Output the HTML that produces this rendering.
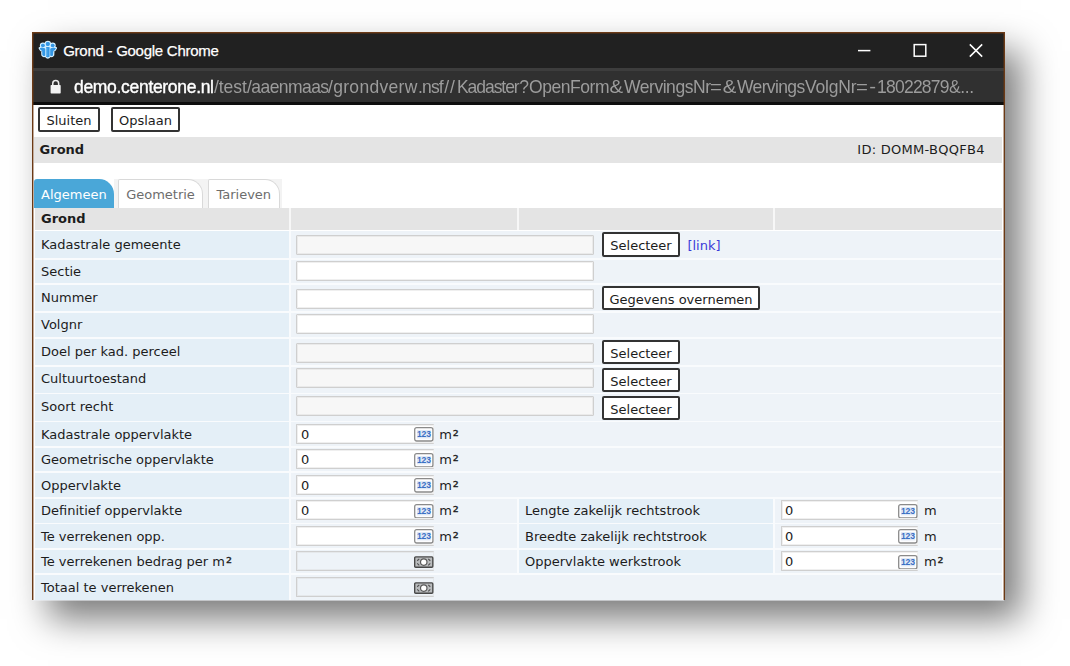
<!DOCTYPE html>
<html lang="nl">
<head>
<meta charset="utf-8">
<title>Grond - Google Chrome</title>
<style>
html,body{margin:0;padding:0;background:#fff;}
body{width:1070px;height:666px;overflow:hidden;position:relative;font-family:"DejaVu Sans","Liberation Sans",sans-serif;font-size:13px;color:#1c1c1c;}
#win{position:absolute;left:32px;top:32px;width:973px;height:568.4px;background:#fff;box-shadow:16px 19px 34px rgba(0,0,0,.52);}
#win div,#win span,#win a,#win svg.ic,#win svg.abs{position:absolute;box-sizing:border-box;white-space:nowrap;}
.bl{background:#6b3a16;}
.bl2{background:rgba(107,58,22,.42);}
.tbar{background:#212121;}
.sep{background:#3d3d3d;}
.ubar{background:#303030;}
.blk{background:#0e0e0e;}
.title{-webkit-text-stroke:.25px #fff;font-family:"Liberation Sans",sans-serif;font-size:15px;letter-spacing:-.26px;color:#fff;line-height:20px;}
.url{font-family:"Liberation Sans",sans-serif;font-size:18.5px;transform:scaleX(.946);transform-origin:0 0;color:#9c9c9c;line-height:24px;text-align:center;}
.url.w{color:#fff;-webkit-text-stroke:.4px #fff;}
.btn{background:#fff;border:2px solid #333;border-radius:2px;text-align:center;line-height:24px;color:#1c1c1c;}
.gray{background:#e4e4e4;}
.lab{background:#e4eff7;}
.val{background:#eef3f8;}
.t{line-height:18px;}
.bold{font-weight:bold;}
.inp{background:#fff;border:1px solid #cfcfcf;box-shadow:inset 0 0 0 1px rgba(214,214,214,.4);border-radius:1px;}
.inp.ro{background:#f7f7f7;}
.inp.nr{border-right:none;}
.inp.tr{background:transparent;}
.tab{background:#fff;border:1px solid #d9d9d9;border-bottom:none;border-radius:2px 15px 0 0;color:#6d6d6d;text-align:center;line-height:30px;}
.tab.on{background:#4aa7d8;border:none;color:#fff;border-radius:3px 15px 0 0;line-height:32px;}
.tabbg{background:#f3f3f3;}
.tbg{background:#f9fbfd;}
.hbg{background:#f7f7f7;}
.half{background:rgba(238,243,248,.55);}
#win span.sq{position:relative;font-size:15px;line-height:0;top:2px;left:.9px;-webkit-text-stroke:.3px #1c1c1c;}
a.lnk{color:#3b3bd9;text-decoration:none;line-height:18px;}
</style>
</head>
<body>
<div id="win">

<div class="tbar" style="left:1px;top:1px;width:971px;height:35px;"></div>
<div class="sep" style="left:1px;top:36px;width:971px;height:2.5px;"></div>
<div class="ubar" style="left:1px;top:38.5px;width:971px;height:32px;"></div>
<div class="blk" style="left:1px;top:70.4px;width:971px;height:2.2px;"></div>
<svg class="abs" viewBox="0 0 20 20" width="19.6" height="19.6" style="left:5.7px;top:8.2px;filter:blur(.35px)"><g fill="#3597e4" stroke="#d2eeff" stroke-width="2.7" stroke-linejoin="round" paint-order="stroke"><circle cx="10" cy="4" r="2"/><circle cx="5" cy="5.6" r="1.8"/><circle cx="15" cy="5.6" r="1.8"/><path d="M8.2 7.6 Q10 6.6 11.8 7.6 L11.8 16.6 Q10 18.8 8.2 16.6 Z"/><path d="M1.9 8.3 Q4.6 7.4 7.3 9 L7.3 15.8 Q6 16.8 4.7 15.2 L4.5 11 Q2.8 10.6 1.9 8.3 Z"/><path d="M18.1 8.3 Q15.4 7.4 12.7 9 L12.7 15.8 Q14 16.8 15.3 15.2 L15.5 11 Q17.2 10.6 18.1 8.3 Z"/></g><g fill="#3597e4"><circle cx="10" cy="4" r="2"/><circle cx="5" cy="5.6" r="1.8"/><circle cx="15" cy="5.6" r="1.8"/><path d="M8.2 7.6 Q10 6.6 11.8 7.6 L11.8 16.6 Q10 18.8 8.2 16.6 Z"/><path d="M1.9 8.3 Q4.6 7.4 7.3 9 L7.3 15.8 Q6 16.8 4.7 15.2 L4.5 11 Q2.8 10.6 1.9 8.3 Z"/><path d="M18.1 8.3 Q15.4 7.4 12.7 9 L12.7 15.8 Q14 16.8 15.3 15.2 L15.5 11 Q17.2 10.6 18.1 8.3 Z"/></g><path d="M8.9 8 L8.9 16.6" stroke="#7cc4f2" stroke-width="0.9" fill="none"/></svg>
<span class="title" style="left:31.2px;top:8.6px">Grond - Google Chrome</span>
<svg class="abs" viewBox="0 0 140 20" width="140" height="20" style="left:820px;top:8px" fill="none" stroke="#fff" stroke-width="1.5"><path d="M6 10.6 H18.4"/><rect x="62.2" y="4.6" width="11.6" height="11.6"/><path d="M117.8 4.4 L130.2 16.6 M130.2 4.4 L117.8 16.6"/></svg>
<svg class="abs" viewBox="0 0 12 15" width="12" height="15" style="left:17.5px;top:46.5px"><path d="M2.75 7 V4.5 A2.95 2.95 0 0 1 8.65 4.5 V7" fill="none" stroke="#ededed" stroke-width="1.5"/><rect x="0.6" y="6.1" width="10.1" height="8.4" rx="0.7" fill="#f2f2f2"/></svg>
<span class="url w" style="left:42.3px;top:42.7px;width:147.67px;letter-spacing:-0.328px;">demo.centerone.nl</span>
<span class="url" style="left:182px;top:42.7px;width:34.67px;letter-spacing:-0.059px;">/test</span>
<span class="url" style="left:214.8px;top:42.7px;width:86.15px;letter-spacing:-0.598px;">/aaenmaas</span>
<span class="url" style="left:296.3px;top:42.7px;width:94.82px;letter-spacing:0.33px;">/grondverw</span>
<span class="url" style="left:386px;top:42.7px;width:26.32px;letter-spacing:-0.877px;">.nsf</span>
<span class="url" style="left:410.9px;top:42.7px;width:14.8px;letter-spacing:0.951px;">//</span>
<span class="url" style="left:424.9px;top:42.7px;width:65.12px;letter-spacing:-1.116px;">Kadaster</span>
<span class="url" style="left:486.5px;top:42.7px;width:10.89px;">?</span>
<span class="url" style="left:496.8px;top:42.7px;width:84.57px;letter-spacing:-0.481px;">OpenForm</span>
<span class="url" style="left:576.8px;top:42.7px;width:13.36px;transform:scaleX(1.1);">&amp;</span>
<span class="url" style="left:591.5px;top:42.7px;width:91.44px;letter-spacing:-0.485px;">WervingsNr</span>
<span class="url" style="left:678px;top:42.7px;width:10.91px;transform:scaleX(1.1);">=</span>
<span class="url" style="left:690px;top:42.7px;width:13.64px;transform:scaleX(1.1);">&amp;</span>
<span class="url" style="left:705px;top:42.7px;width:71.35px;letter-spacing:-0.678px;">Wervings</span>
<span class="url" style="left:772.5px;top:42.7px;width:54.44px;letter-spacing:-0.182px;">VolgNr</span>
<span class="url" style="left:824px;top:42.7px;width:10.73px;transform:scaleX(1.1);">=</span>
<span class="url" style="left:835.8px;top:42.7px;width:8.45px;transform:scaleX(1.1);">-</span>
<span class="url" style="left:845.1px;top:42.7px;width:75.9px;letter-spacing:-0.802px;">18022879</span>
<span class="url" style="left:916.9px;top:42.7px;width:26px;letter-spacing:-0.44px;">&amp;...</span>
<div class="btn" style="left:6px;top:75.4px;width:62px;height:24.2px;">Sluiten</div>
<div class="btn" style="left:79px;top:75.4px;width:69px;height:24.2px;">Opslaan</div>
<div class="gray" style="left:1.8px;top:104.6px;width:968.2px;height:26.4px;"></div>
<span class="t bold" style="left:7.6px;top:109px">Grond</span>
<span class="t" style="right:20.2px;top:109px;letter-spacing:.28px">ID: DOMM-BQQFB4</span>
<div class="tabbg" style="left:82px;top:147px;width:168px;height:28.6px;"></div>
<div class="tab on" style="left:1.8px;top:147.4px;width:80.2px;height:28.2px;">Algemeen</div>
<div class="tab" style="left:86px;top:147.4px;width:85px;height:28.2px;">Geometrie</div>
<div class="tab" style="left:175.6px;top:147.4px;width:72.4px;height:28.2px;">Tarieven</div>
<div class="hbg" style="left:2.8px;top:176px;width:967.2px;height:21.8px;"></div>
<div class="tbg" style="left:2.8px;top:199px;width:967.2px;height:369.4px;"></div>
<div class="gray" style="left:2.8px;top:176px;width:253.9px;height:21.8px;"></div>
<div class="gray" style="left:258.8px;top:176px;width:226.2px;height:21.8px;"></div>
<div class="gray" style="left:487px;top:176px;width:254px;height:21.8px;"></div>
<div class="gray" style="left:743px;top:176px;width:227px;height:21.8px;"></div>
<span class="t bold" style="left:9px;top:177.6px">Grond</span>
<div class="lab" style="left:2.8px;top:199.3px;width:253.9px;height:26.4px;"></div>
<span class="t" style="left:9px;top:203.6px">Kadastrale gemeente</span>
<div class="val" style="left:258.8px;top:199.3px;width:711.2px;height:26.4px;"></div>
<div class="inp ro" style="left:264.4px;top:203.2px;width:298px;height:20px;"></div>
<div class="btn" style="left:570px;top:200.4px;width:78px;height:24.2px;">Selecteer</div>
<a class="lnk" style="left:655.4px;top:205.3px">[link]</a>
<div class="lab" style="left:2.8px;top:227.5px;width:253.9px;height:23.8px;"></div>
<span class="t" style="left:9px;top:230.8px">Sectie</span>
<div class="val" style="left:258.8px;top:227.5px;width:711.2px;height:23.8px;"></div>
<div class="inp" style="left:264.4px;top:228.9px;width:298px;height:20px;"></div>
<div class="lab" style="left:2.8px;top:253px;width:253.9px;height:26.3px;"></div>
<span class="t" style="left:9px;top:257.3px">Nummer</span>
<div class="val" style="left:258.8px;top:253px;width:711.2px;height:26.3px;"></div>
<div class="inp" style="left:264.4px;top:256.8px;width:298px;height:20px;"></div>
<div class="btn" style="left:570px;top:254.1px;width:158px;height:24.2px;">Gegevens overnemen</div>
<div class="lab" style="left:2.8px;top:280.9px;width:253.9px;height:23.9px;"></div>
<span class="t" style="left:9px;top:284.2px">Volgnr</span>
<div class="val" style="left:258.8px;top:280.9px;width:711.2px;height:23.9px;"></div>
<div class="inp" style="left:264.4px;top:282.3px;width:298px;height:20px;"></div>
<div class="lab" style="left:2.8px;top:306.6px;width:253.9px;height:26.3px;"></div>
<span class="t" style="left:9px;top:310.9px">Doel per kad. perceel</span>
<div class="val" style="left:258.8px;top:306.6px;width:711.2px;height:26.3px;"></div>
<div class="inp ro" style="left:264.4px;top:310.5px;width:298px;height:20px;"></div>
<div class="btn" style="left:570px;top:307.7px;width:78px;height:24.2px;">Selecteer</div>
<div class="lab" style="left:2.8px;top:334.6px;width:253.9px;height:26.1px;"></div>
<span class="t" style="left:9px;top:337.9px">Cultuurtoestand</span>
<div class="val" style="left:258.8px;top:334.6px;width:711.2px;height:26.1px;"></div>
<div class="inp ro" style="left:264.4px;top:336.1px;width:298px;height:20px;"></div>
<div class="btn" style="left:570px;top:335.7px;width:78px;height:24.2px;">Selecteer</div>
<div class="lab" style="left:2.8px;top:362.4px;width:253.9px;height:26.2px;"></div>
<span class="t" style="left:9px;top:365.7px">Soort recht</span>
<div class="val" style="left:258.8px;top:362.4px;width:711.2px;height:26.2px;"></div>
<div class="inp ro" style="left:264.4px;top:363.9px;width:298px;height:20px;"></div>
<div class="btn" style="left:570px;top:363.5px;width:78px;height:24.2px;">Selecteer</div>
<div class="lab" style="left:2.8px;top:390.2px;width:253.9px;height:23.8px;"></div>
<span class="t" style="left:9px;top:393.7px">Kadastrale oppervlakte</span>
<div class="val" style="left:258.8px;top:390.2px;width:711.2px;height:23.8px;"></div>
<div class="inp nr" style="left:264.4px;top:391.7px;width:137.6px;height:19.9px;"></div>
<span class="t" style="left:269px;top:393.7px">0</span>
<svg class="ic" viewBox="0 0 20 15" width="19.6" height="14.7" style="left:382.1px;top:395.1px"><rect x="0.7" y="0.7" width="18.6" height="13.6" rx="2" fill="#fdfdfe" stroke="#8a8a8a" stroke-width="1.3"/><rect x="3" y="3.2" width="14.2" height="8.4" fill="#dde7f5"/><text x="10.1" y="10.7" text-anchor="middle" font-family="Liberation Sans, sans-serif" font-size="8.8" font-weight="bold" fill="#3a6fc4" letter-spacing="-0.2">123</text></svg>
<span class="t" style="left:407.2px;top:393.7px">m<span class="sq">²</span></span>
<div class="lab" style="left:2.8px;top:415.7px;width:253.9px;height:23.8px;"></div>
<span class="t" style="left:9px;top:419.2px">Geometrische oppervlakte</span>
<div class="val" style="left:258.8px;top:415.7px;width:711.2px;height:23.8px;"></div>
<div class="inp nr" style="left:264.4px;top:417.2px;width:137.6px;height:19.9px;"></div>
<span class="t" style="left:269px;top:419.2px">0</span>
<svg class="ic" viewBox="0 0 20 15" width="19.6" height="14.7" style="left:382.1px;top:420.6px"><rect x="0.7" y="0.7" width="18.6" height="13.6" rx="2" fill="#fdfdfe" stroke="#8a8a8a" stroke-width="1.3"/><rect x="3" y="3.2" width="14.2" height="8.4" fill="#dde7f5"/><text x="10.1" y="10.7" text-anchor="middle" font-family="Liberation Sans, sans-serif" font-size="8.8" font-weight="bold" fill="#3a6fc4" letter-spacing="-0.2">123</text></svg>
<span class="t" style="left:407.2px;top:419.2px">m<span class="sq">²</span></span>
<div class="lab" style="left:2.8px;top:441.2px;width:253.9px;height:23.8px;"></div>
<span class="t" style="left:9px;top:444.7px">Oppervlakte</span>
<div class="val" style="left:258.8px;top:441.2px;width:711.2px;height:23.8px;"></div>
<div class="inp nr" style="left:264.4px;top:442.7px;width:137.6px;height:19.9px;"></div>
<span class="t" style="left:269px;top:444.7px">0</span>
<svg class="ic" viewBox="0 0 20 15" width="19.6" height="14.7" style="left:382.1px;top:446.1px"><rect x="0.7" y="0.7" width="18.6" height="13.6" rx="2" fill="#fdfdfe" stroke="#8a8a8a" stroke-width="1.3"/><rect x="3" y="3.2" width="14.2" height="8.4" fill="#dde7f5"/><text x="10.1" y="10.7" text-anchor="middle" font-family="Liberation Sans, sans-serif" font-size="8.8" font-weight="bold" fill="#3a6fc4" letter-spacing="-0.2">123</text></svg>
<span class="t" style="left:407.2px;top:444.7px">m<span class="sq">²</span></span>
<div class="lab" style="left:2.8px;top:466.6px;width:253.9px;height:24px;"></div>
<span class="t" style="left:9px;top:470.1px">Definitief oppervlakte</span>
<div class="val" style="left:258.8px;top:466.6px;width:226.2px;height:24px;"></div>
<div class="lab" style="left:487px;top:466.6px;width:254px;height:24px;"></div>
<div class="val" style="left:743px;top:466.6px;width:227px;height:24px;"></div>
<div class="inp nr" style="left:264.4px;top:468.1px;width:137.6px;height:19.9px;"></div>
<span class="t" style="left:269px;top:470.1px">0</span>
<svg class="ic" viewBox="0 0 20 15" width="19.6" height="14.7" style="left:382.1px;top:471.5px"><rect x="0.7" y="0.7" width="18.6" height="13.6" rx="2" fill="#fdfdfe" stroke="#8a8a8a" stroke-width="1.3"/><rect x="3" y="3.2" width="14.2" height="8.4" fill="#dde7f5"/><text x="10.1" y="10.7" text-anchor="middle" font-family="Liberation Sans, sans-serif" font-size="8.8" font-weight="bold" fill="#3a6fc4" letter-spacing="-0.2">123</text></svg>
<span class="t" style="left:407.2px;top:470.1px">m<span class="sq">²</span></span>
<span class="t" style="left:493px;top:470.1px">Lengte zakelijk rechtstrook</span>
<div class="inp nr" style="left:748.6px;top:468.1px;width:137.4px;height:19.9px;"></div>
<span class="t" style="left:753px;top:470.1px">0</span>
<svg class="ic" viewBox="0 0 20 15" width="19.6" height="14.7" style="left:866.1px;top:471.5px"><rect x="0.7" y="0.7" width="18.6" height="13.6" rx="2" fill="#fdfdfe" stroke="#8a8a8a" stroke-width="1.3"/><rect x="3" y="3.2" width="14.2" height="8.4" fill="#dde7f5"/><text x="10.1" y="10.7" text-anchor="middle" font-family="Liberation Sans, sans-serif" font-size="8.8" font-weight="bold" fill="#3a6fc4" letter-spacing="-0.2">123</text></svg>
<span class="t" style="left:892px;top:470.1px">m</span>
<div class="lab" style="left:2.8px;top:492.2px;width:253.9px;height:23.8px;"></div>
<span class="t" style="left:9px;top:495.7px">Te verrekenen opp.</span>
<div class="val" style="left:258.8px;top:492.2px;width:226.2px;height:23.8px;"></div>
<div class="lab" style="left:487px;top:492.2px;width:254px;height:23.8px;"></div>
<div class="val" style="left:743px;top:492.2px;width:227px;height:23.8px;"></div>
<div class="inp nr" style="left:264.4px;top:493.7px;width:137.6px;height:19.9px;"></div>
<svg class="ic" viewBox="0 0 20 15" width="19.6" height="14.7" style="left:382.1px;top:497.1px"><rect x="0.7" y="0.7" width="18.6" height="13.6" rx="2" fill="#fdfdfe" stroke="#8a8a8a" stroke-width="1.3"/><rect x="3" y="3.2" width="14.2" height="8.4" fill="#dde7f5"/><text x="10.1" y="10.7" text-anchor="middle" font-family="Liberation Sans, sans-serif" font-size="8.8" font-weight="bold" fill="#3a6fc4" letter-spacing="-0.2">123</text></svg>
<span class="t" style="left:407.2px;top:495.7px">m<span class="sq">²</span></span>
<span class="t" style="left:493px;top:495.7px">Breedte zakelijk rechtstrook</span>
<div class="inp nr" style="left:748.6px;top:493.7px;width:137.4px;height:19.9px;"></div>
<span class="t" style="left:753px;top:495.7px">0</span>
<svg class="ic" viewBox="0 0 20 15" width="19.6" height="14.7" style="left:866.1px;top:497.1px"><rect x="0.7" y="0.7" width="18.6" height="13.6" rx="2" fill="#fdfdfe" stroke="#8a8a8a" stroke-width="1.3"/><rect x="3" y="3.2" width="14.2" height="8.4" fill="#dde7f5"/><text x="10.1" y="10.7" text-anchor="middle" font-family="Liberation Sans, sans-serif" font-size="8.8" font-weight="bold" fill="#3a6fc4" letter-spacing="-0.2">123</text></svg>
<span class="t" style="left:892px;top:495.7px">m</span>
<div class="lab" style="left:2.8px;top:517.7px;width:253.9px;height:23.8px;"></div>
<span class="t" style="left:9px;top:521.2px">Te verrekenen bedrag per m<span class="sq">²</span></span>
<div class="val" style="left:258.8px;top:517.7px;width:226.2px;height:23.8px;"></div>
<div class="lab" style="left:487px;top:517.7px;width:254px;height:23.8px;"></div>
<div class="val" style="left:743px;top:517.7px;width:227px;height:23.8px;"></div>
<div class="inp nr tr" style="left:264.4px;top:519.2px;width:137.6px;height:19.9px;"></div>
<svg class="ic" viewBox="0 0 20 12" width="19.5" height="12.2" style="left:382.2px;top:524.1px"><rect x="0.7" y="0.7" width="18.6" height="10.6" rx="1" fill="#b9bbbd" stroke="#484848" stroke-width="1.4"/><circle cx="10" cy="6" r="3.3" fill="#fff" stroke="#5a5a5a" stroke-width="1.2"/><path d="M5.4 2.7 L3.3 4.6 M3.3 7.4 L5.4 9.3 M14.6 2.7 L16.7 4.6 M16.7 7.4 L14.6 9.3" fill="none" stroke="#4e4e4e" stroke-width="1.1"/></svg>
<span class="t" style="left:493px;top:521.2px">Oppervlakte werkstrook</span>
<div class="inp nr" style="left:748.6px;top:519.2px;width:137.4px;height:19.9px;"></div>
<span class="t" style="left:753px;top:521.2px">0</span>
<svg class="ic" viewBox="0 0 20 15" width="19.6" height="14.7" style="left:866.1px;top:522.6px"><rect x="0.7" y="0.7" width="18.6" height="13.6" rx="2" fill="#fdfdfe" stroke="#8a8a8a" stroke-width="1.3"/><rect x="3" y="3.2" width="14.2" height="8.4" fill="#dde7f5"/><text x="10.1" y="10.7" text-anchor="middle" font-family="Liberation Sans, sans-serif" font-size="8.8" font-weight="bold" fill="#3a6fc4" letter-spacing="-0.2">123</text></svg>
<span class="t" style="left:892px;top:521.2px">m<span class="sq">²</span></span>
<div class="lab" style="left:2.8px;top:543.2px;width:253.9px;height:25.2px;"></div>
<span class="t" style="left:9px;top:546.7px">Totaal te verrekenen</span>
<div class="val" style="left:258.8px;top:543.2px;width:711.2px;height:25.2px;"></div>
<div class="inp nr tr" style="left:264.4px;top:544.7px;width:137.6px;height:19.9px;"></div>
<svg class="ic" viewBox="0 0 20 12" width="19.5" height="12.2" style="left:382.2px;top:549.6px"><rect x="0.7" y="0.7" width="18.6" height="10.6" rx="1" fill="#b9bbbd" stroke="#484848" stroke-width="1.4"/><circle cx="10" cy="6" r="3.3" fill="#fff" stroke="#5a5a5a" stroke-width="1.2"/><path d="M5.4 2.7 L3.3 4.6 M3.3 7.4 L5.4 9.3 M14.6 2.7 L16.7 4.6 M16.7 7.4 L14.6 9.3" fill="none" stroke="#4e4e4e" stroke-width="1.1"/></svg>
<div class="bl" style="left:0px;top:0px;width:973px;height:1px;"></div>
<div class="bl" style="left:0px;top:0px;width:1px;height:568.4px;"></div>
<div class="bl" style="left:972px;top:0px;width:1px;height:568.4px;"></div>
<div class="bl2" style="left:1px;top:1px;width:971px;height:1px;"></div>
<div class="bl2" style="left:1px;top:1px;width:1px;height:567.4px;"></div>
<div class="bl2" style="left:971px;top:1px;width:1px;height:567.4px;"></div>
<div class="half" style="left:1px;top:568px;width:971px;height:1px;"></div>
</div>
</body>
</html>
